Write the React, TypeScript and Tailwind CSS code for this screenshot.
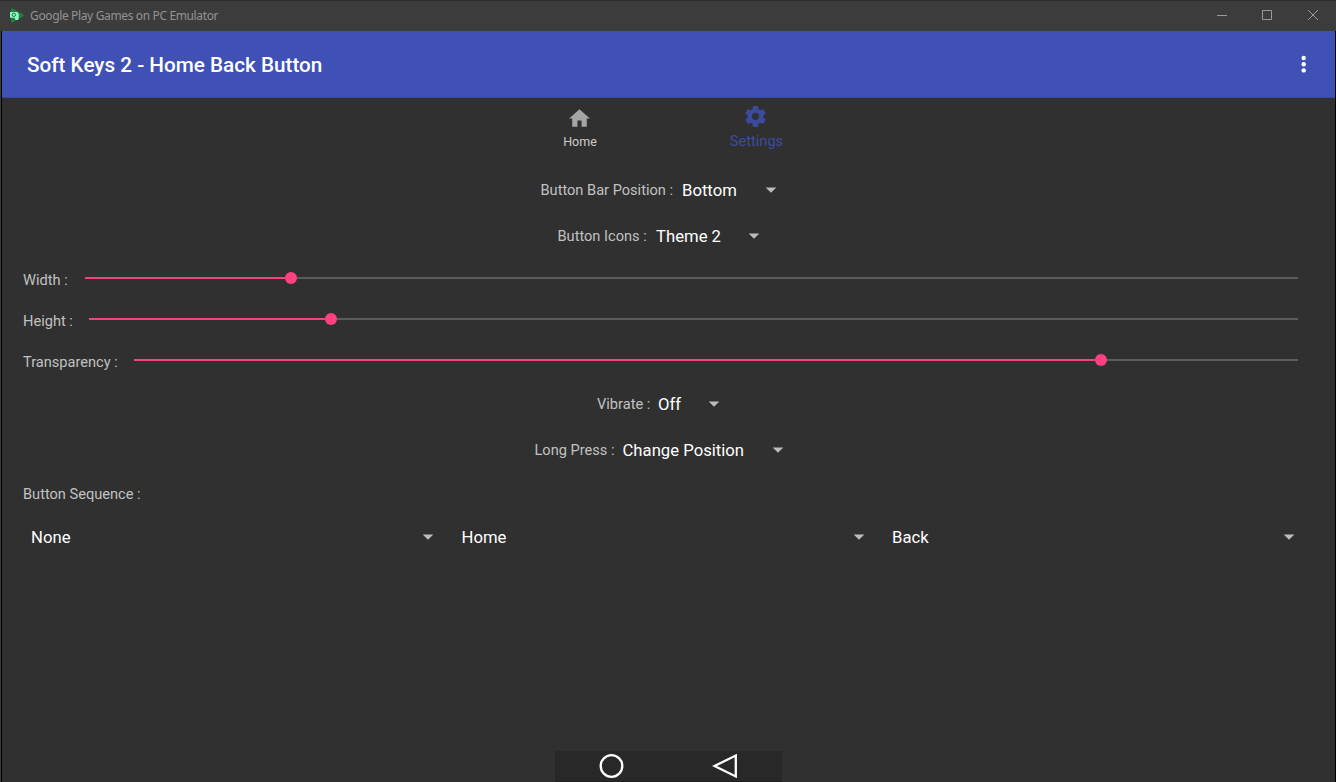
import React from 'react';

const Caret = ({ className }: { className: string }) => (
  <svg className={`block h-[6px] w-[12px] shrink-0 ${className}`} viewBox="0 0 12 6">
    <path d="M0.7 0.4h10.6L6 5.7z" fill="#bdbdbd" />
  </svg>
);

const labelText = 'whitespace-nowrap text-[14.6px] text-[#c1c1c1]';
const valueText = 'whitespace-nowrap text-[16.7px] text-white';

type SpinnerProps = { label: string; value: string; rowClass: string; labelClass: string; valueClass: string };

function SpinnerRow({ label, value, rowClass, labelClass, valueClass }: SpinnerProps) {
  return (
    <div className={`flex h-[46px] items-center ${rowClass}`}>
      <span className={`${labelText} ${labelClass}`}>{label}</span>
      <span className={`${valueText} ${valueClass}`}>{value}</span>
      <Caret className="mb-[3px]" />
    </div>
  );
}

type SliderProps = { label: string; labelClass: string; fillClass: string };

function SliderRow({ label, labelClass, fillClass }: SliderProps) {
  return (
    <div className="flex h-[41px] items-center pr-[37px] pl-[21px]">
      <span className={`${labelText} ${labelClass} shrink-0`}>{label}</span>
      <div className="mb-[6px] flex flex-1 items-center">
        <div className={`h-[2px] shrink-0 bg-[#f5427e] ${fillClass}`} />
        <div className="h-[12px] w-[12px] shrink-0 rounded-full bg-[#ff4081]" />
        <div className="h-[2px] flex-1 bg-[#5c5c5c]" />
      </div>
    </div>
  );
}

function TitleBar() {
  return (
    <header className="flex h-[31px] shrink-0 items-center border-t border-[#2b2b2b] bg-[#3c3c3c] pr-[17px] pb-px pl-[10px]">
      <svg className="block h-[15px] w-[14px]" viewBox="0 0 14 15">
        <path d="M1 1.4Q1 0 2.4.5L13 6.2Q14.4 7.3 13 8.4L2.4 14.4Q1 15 1 13.4z" fill="#1f7f40" />
        <path d="M0 4h7.2l1.6 2v4.2L8 12H5.6L4.4 9.8H0z" fill="#8df5c0" />
        <circle cx="3.8" cy="6.8" r="1.7" fill="none" stroke="#1c7a3c" />
      </svg>
      <span className="ml-[6px] w-[200px] whitespace-nowrap font-['Noto_Sans',sans-serif] text-[12px] tracking-[-0.36px] text-[#929292]">
        Google Play Games on PC Emulator
      </span>
      <div className="ml-auto flex items-center">
        <svg className="block h-[12px] w-[12px]" viewBox="0 0 12 12">
          <path d="M1 5.5h10" stroke="#999" />
        </svg>
        <svg className="mb-[2px] ml-[33px] block h-[12px] w-[12px]" viewBox="0 0 12 12">
          <path d="M1.5 1.5h9v9h-9z" stroke="#999" fill="none" />
        </svg>
        <svg className="mb-[2px] ml-[34px] block h-[12px] w-[12px]" viewBox="0 0 12 12">
          <path d="M1 1l10 10M11 1L1 11" stroke="#999" fill="none" />
        </svg>
      </div>
    </header>
  );
}

const sequence = ['None', 'Home', 'Back'];

export default function App() {
  return (
    <div className="flex h-[782px] w-[1336px] flex-col overflow-hidden bg-[#303030] font-[Roboto,sans-serif]">
      <TitleBar />
      <div className="flex min-h-0 flex-1 border-l border-[#3c3c3c]">
        <div className="flex flex-1 flex-col border-x border-black">
          <div className="flex h-[67px] shrink-0 items-center justify-between border-b border-[#39489b] bg-[#3f51b5] pr-[29px] pl-[25px]">
            <h1 className="whitespace-nowrap pt-[3px] text-[20.7px] font-medium text-white">Soft Keys 2 - Home Back Button</h1>
            <svg className="block h-[18px] w-[5px]" viewBox="0 0 5 18" fill="#fff">
              <circle cx="2.7" cy="3" r="2.2" />
              <circle cx="2.7" cy="9.2" r="2.2" />
              <circle cx="2.7" cy="15.4" r="2.2" />
            </svg>
          </div>

          <nav className="flex h-[70px] shrink-0 pl-[490px]">
            <div className="flex w-[176px] flex-col items-center">
              <svg className="mt-[8px] mr-px block h-[25px] w-[25px]" viewBox="0 0 24 24" fill="#a5a5a5">
                <path d="M10 20v-6h4v6h5v-8h3L12 3 2 12h3v8z" />
              </svg>
              <span className="mt-[2px] text-[12.5px] leading-[18px] text-[#cbcbcb]">Home</span>
            </div>
            <div className="flex w-[176px] flex-col items-center">
              <svg className="mt-[6px] mr-px block h-[25px] w-[25px]" viewBox="0 0 24 24" fill="#3b4a9d">
                <path d="M19.43 12.98c.04-.32.07-.64.07-.98s-.03-.66-.07-.98l2.11-1.65c.19-.15.24-.42.12-.64l-2-3.46c-.12-.22-.39-.3-.61-.22l-2.49 1c-.52-.4-1.08-.73-1.69-.98l-.38-2.65C14.46 2.18 14.25 2 14 2h-4c-.25 0-.46.18-.49.42l-.38 2.65c-.61.25-1.17.59-1.69.98l-2.49-1c-.23-.09-.49 0-.61.22l-2 3.46c-.13.22-.07.49.12.64l2.11 1.65c-.04.32-.07.65-.07.98s.03.66.07.98l-2.11 1.65c-.19.15-.24.42-.12.64l2 3.46c.12.22.39.3.61.22l2.49-1c.52.4 1.08.73 1.69.98l.38 2.65c.03.24.24.42.49.42h4c.25 0 .46-.18.49-.42l.38-2.65c.61-.25 1.17-.59 1.69-.98l2.49 1c.23.09.49 0 .61-.22l2-3.46c.12-.22.07-.49-.12-.64l-2.11-1.65zM12 15.5c-1.93 0-3.5-1.57-3.5-3.5s1.57-3.5 3.5-3.5 3.5 1.57 3.5 3.5-1.57 3.5-3.5 3.5z" />
              </svg>
              <span className="mt-[3px] pl-px text-[14.6px] leading-[18px] text-[#3c4ba0]">Settings</span>
            </div>
          </nav>

          <main className="flex min-h-0 flex-1 flex-col">
            <SpinnerRow label="Button Bar Position :" value="Bottom" rowClass="pl-[538.5px]" labelClass="w-[141.5px]" valueClass="w-[82.5px]" />
            <SpinnerRow label="Button Icons :" value="Theme 2" rowClass="pl-[555.5px]" labelClass="w-[98.5px]" valueClass="w-[92px]" />
            <SliderRow label="Width :" labelClass="w-[62px]" fillClass="w-[200px]" />
            <SliderRow label="Height :" labelClass="w-[66px]" fillClass="w-[236px]" />
            <SliderRow label="Transparency :" labelClass="w-[111px]" fillClass="w-[961px]" />
            <div className="-mt-px">
              <SpinnerRow label="Vibrate :" value="Off" rowClass="pl-[595px]" labelClass="w-[61px]" valueClass="w-[50px]" />
            </div>
            <SpinnerRow label="Long Press :" value="Change Position" rowClass="pl-[532.5px]" labelClass="w-[88px]" valueClass="w-[149px]" />
            <div className="flex h-[42px] items-center pl-[21px]">
              <span className={labelText}>Button Sequence :</span>
            </div>
            <div className="grid h-[44px] grid-cols-[430.5px_430.5px_430.5px] items-center pl-[29px]">
              {sequence.map((s) => (
                <div key={s} className="flex items-center">
                  <span className={`${valueText} w-[391px]`}>{s}</span>
                  <Caret className="mb-px" />
                </div>
              ))}
            </div>
            <div className="mt-auto ml-[553px] flex h-[31px] w-[227px] items-center border-b border-[#202020] bg-[#282828] pl-[44px]">
              <svg className="block h-[26px] w-[25px]" viewBox="0 0 25 26">
                <circle cx="12.5" cy="13" r="10.8" fill="none" stroke="#fff" strokeWidth="2.3" />
              </svg>
              <svg className="ml-[88px] block h-[26px] w-[26px]" viewBox="0 0 26 26">
                <path d="M2.5 13L23.8 2.5v21z" fill="none" stroke="#fff" strokeWidth="2.3" />
              </svg>
            </div>
          </main>
        </div>
      </div>
    </div>
  );
}
